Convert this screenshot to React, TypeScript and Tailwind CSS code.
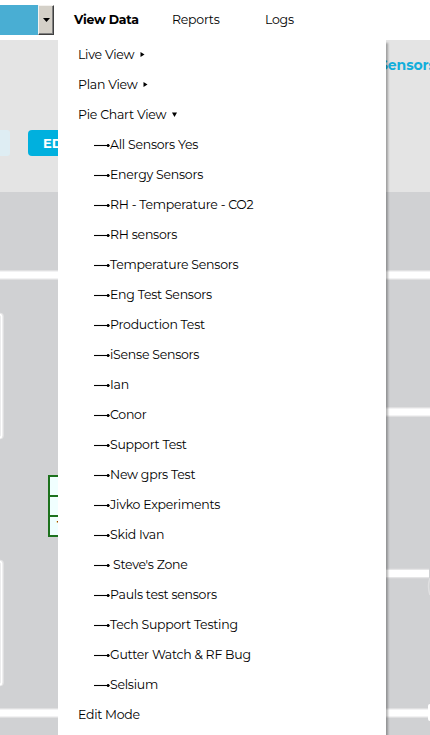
import React from "react";

const zones = [
  "All Sensors Yes",
  "Energy Sensors",
  "RH - Temperature - CO2",
  "RH sensors",
  "Temperature Sensors",
  "Eng Test Sensors",
  "Production Test",
  "iSense Sensors",
  "Ian",
  "Conor",
  "Support Test",
  "New gprs Test",
  "Jivko Experiments",
  "Skid Ivan",
  " Steve's Zone",
  "Pauls test sensors",
  "Tech Support Testing",
  "Gutter Watch & RF Bug",
  "Selsium",
];

function ZoneArrow() {
  return (
    <svg width="16" height="5" viewBox="0 0 16 5" className="mt-px shrink-0">
      <path d="M0 2.5H15" stroke="#000" strokeWidth="1.1" />
      <path d="M13.2 1H14.6L16 2.5L14.6 4H13.2Z" fill="#000" />
    </svg>
  );
}

function Header() {
  return (
    <header className="flex h-10 items-center bg-white">
      <div className="flex h-[30px] w-[54px] shrink-0 bg-[#49aed3]">
        <div className="ml-[38px] flex w-4 items-center justify-center border border-t-[#f4f2ef] border-l-[#f4f2ef] border-r-[#404040] border-b-[#404040] bg-[#d4d0c8] shadow-[inset_-1px_-1px_0_#808080]">
          <svg width="7" height="4" viewBox="0 0 7 4">
            <path d="M0 0H7L3.5 4Z" fill="#000" />
          </svg>
        </div>
      </div>
      <nav className="flex items-center text-[12.5px] leading-5 tracking-[-0.25px] text-black">
        <a className="w-[98px] pl-5 font-bold whitespace-nowrap">View Data</a>
        <a className="w-[93px] pl-5">Reports</a>
        <a className="pl-5">Logs</a>
      </nav>
    </header>
  );
}

function FloorPlan() {
  return (
    <div className="relative flex-1 overflow-hidden bg-[#d0d1d3]">
      <svg width="430" height="543" viewBox="0 192 430 543" className="absolute top-0 left-0" fill="none">
        <g stroke="#e5e5e6" strokeWidth="9.5">
          <path d="M0 275H430M386 412H430M386 573.5H429M0 713H430" />
        </g>
        <g stroke="#fff" strokeWidth="7">
          <path d="M0 275H430M386 412H430M386 573.5H429M0 713H430" />
        </g>
        <g stroke="#e5e5e6" strokeWidth="3.5">
          <rect x="-40" y="314.5" width="42" height="123" rx="2" />
          <rect x="-40" y="561.5" width="42" height="123" rx="2" />
        </g>
        <g stroke="#fff" strokeWidth="1.8">
          <rect x="-40" y="314.5" width="41.5" height="123" rx="2" />
          <rect x="-40" y="561.5" width="41.5" height="123" rx="2" />
        </g>
        <path d="M430 578Q427 586 430 595" stroke="#e0e0e1" strokeWidth="1.5" />
        <rect x="428" y="704" width="8" height="17" rx="2" fill="#fff" />
      </svg>
      <div className="absolute top-[283px] left-12 h-[62px] w-20 divide-y-2 divide-[#1c711d] border-2 border-[#1c711d] bg-[#f0ffff]">
        <div className="h-5" />
        <div className="h-5" />
        <div className="h-[18px] pt-[2px] pl-[7px] text-[11px] leading-3 font-bold text-[#803000]">T</div>
      </div>
    </div>
  );
}

function Menu() {
  return (
    <div className="absolute top-10 left-[58px] h-[695px] w-[328px] bg-white pl-5 text-[12.5px] leading-[30px] tracking-[-0.25px] whitespace-pre text-black shadow-[2px_3px_2px_rgba(0,0,0,0.3)]">
      <div className="flex h-[30px] items-start">
        <span className="w-[62px]">Live View</span>
        <svg width="5" height="5" viewBox="0 0 5 5" className="mt-[12px]">
          <path d="M0.5 0L4.5 2.5L0.5 5Z" fill="#000" />
        </svg>
      </div>
      <div className="flex h-[30px] items-start">
        <span className="w-[65px]">Plan View</span>
        <svg width="5" height="5" viewBox="0 0 5 5" className="mt-[12px]">
          <path d="M0.5 0L4.5 2.5L0.5 5Z" fill="#000" />
        </svg>
      </div>
      <div className="flex h-[30px] items-start">
        <span className="w-[94px]">Pie Chart View</span>
        <svg width="5" height="5" viewBox="0 0 5 5" className="mt-[12px]">
          <path d="M0 0.5H5L2.5 5Z" fill="#000" />
        </svg>
      </div>
      <ul className="pl-4">
        {zones.map((zone) => (
          <li key={zone} className="flex h-[30px] items-center">
            <ZoneArrow />
            <span>{zone}</span>
          </li>
        ))}
      </ul>
      <div className="h-[30px]">Edit Mode</div>
    </div>
  );
}

export default function App() {
  return (
    <div className="relative flex h-[735px] w-[430px] flex-col overflow-hidden bg-white font-['Montserrat','Inter',sans-serif]">
      <Header />
      <section className="h-[152px] bg-[#e4e4e4]">
        <div className="flex h-[90px] justify-end pt-4">
          <h2 className="w-[51px] text-[14px] leading-[18px] font-bold tracking-[-0.1px] whitespace-nowrap text-[#12aedb]">Sensors</h2>
        </div>
        <div className="flex gap-[18px]">
          <div className="h-[26px] w-[10px] rounded-r-[3px] bg-[#deedf3]" />
          <button className="h-[26px] w-20 rounded bg-[#00b0de] pl-[15px] text-left text-[13px] leading-[26px] font-bold text-white">
            EDIT
          </button>
        </div>
      </section>
      <FloorPlan />
      <Menu />
    </div>
  );
}
